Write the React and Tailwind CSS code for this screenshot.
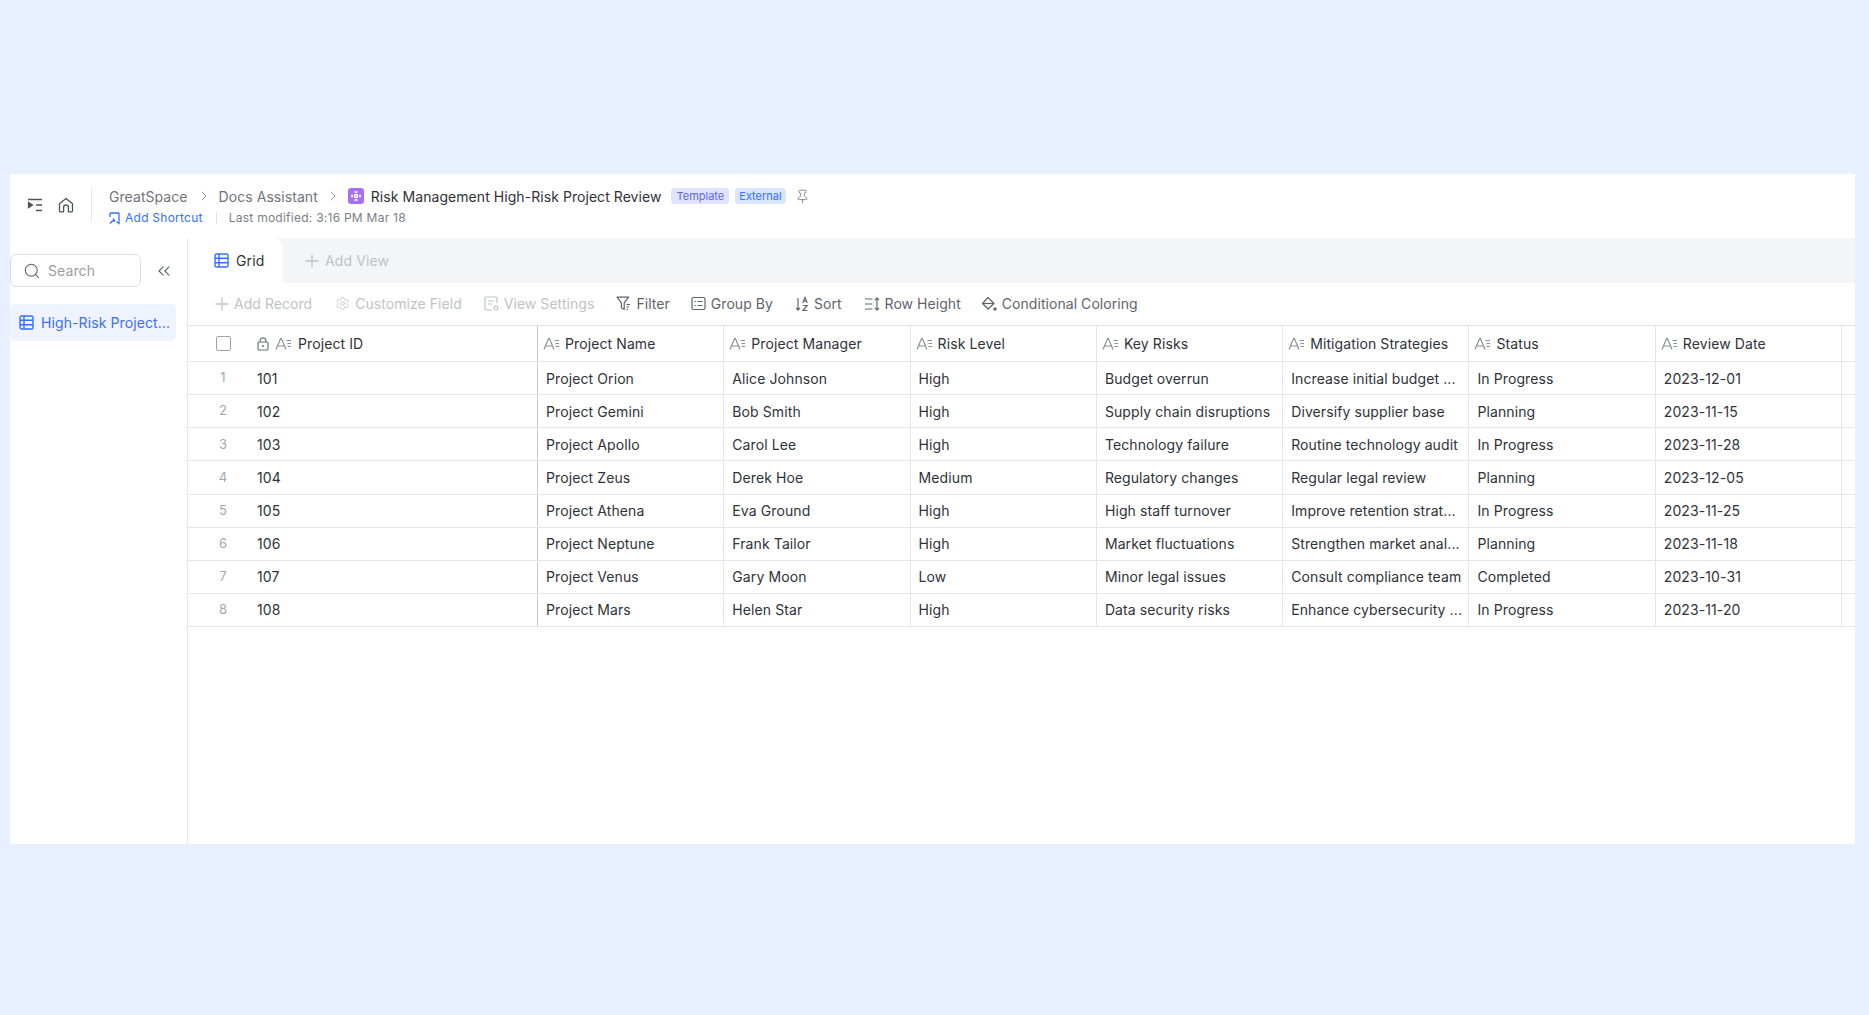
import React from "react";
import { Search, ChevronsLeft, Settings, Pin, ChevronRight } from "lucide-react";

const FieldIcon = () => (
  <svg width="17" height="14" viewBox="0 0 17 14" fill="none" stroke="#8a8f96" strokeWidth="1.2" className="shrink-0">
    <path d="M1 12.5 5.6 1.5h.8L11 12.5M2.8 9h6.4" />
    <path d="M11.5 3.5H16M12.5 6.5H16M12.5 9.5H16" />
  </svg>
);
const PlusIcon = () => (
  <svg width="14" height="14" viewBox="0 0 14 14" fill="none" stroke="currentColor" strokeWidth="1.3" className="shrink-0">
    <path d="M7 .5v13M.5 7h13" />
  </svg>
);
const GridIcon = ({ c = "#3370ff", s = 15 }) => (
  <svg width={s} height={s} viewBox="0 0 15 15" fill="none" stroke={c} strokeWidth="1.4" className="shrink-0">
    <rect x="1" y="1" width="13" height="13" rx="1.6" />
    <path d="M1 5.3h13M1 9.7h13M5 1v13" />
  </svg>
);
const ToggleIcon = () => (
  <svg width="16" height="14" viewBox="0 0 16 14" fill="none" stroke="#4e5358" strokeWidth="1.3">
    <path d="M1 1.5h14M9 7h6M9 12.5h6" />
    <path d="M1.5 4.5 5.5 7l-4 2.5z" fill="#4e5358" />
  </svg>
);
const HomeIcon = () => (
  <svg width="16" height="16" viewBox="0 0 16 16" fill="none" stroke="#4e5358" strokeWidth="1.3" strokeLinejoin="round">
    <path d="M1.5 6.8 8 1.5l6.5 5.3V14a.8.8 0 0 1-.8.8H10.4V10.2a2.4 2.4 0 0 0-4.8 0v4.6H2.3a.8.8 0 0 1-.8-.8z" />
  </svg>
);
const ShortcutIcon = () => (
  <svg width="11" height="13" viewBox="0 0 11 13" fill="none" stroke="#3370ff" strokeWidth="1.3" className="shrink-0">
    <path d="M1 5V1.6c0-.4.3-.6.6-.6h7.8c.3 0 .6.2.6.6v9.9L7.6 9.8" />
    <path d="M1 11.5 3.5 9H6M4 6.5l2 2.5" />
  </svg>
);
const DocLogo = () => (
  <span className="flex h-4 w-4 shrink-0 items-center justify-center rounded-[3px] bg-[#a66ff5]">
    <svg width="10" height="10" viewBox="0 0 10 10" fill="none" stroke="#fff" strokeWidth="1.5">
      <path d="M3.4 1h3.2M3.4 9h3.2M1 3.4v3.2M9 3.4v3.2" />
      <circle cx="5" cy="5" r="1.5" />
    </svg>
  </span>
);
const ViewSettingsIcon = () => (
  <svg width="15" height="15" viewBox="0 0 15 15" fill="none" stroke="#c0c3c8" strokeWidth="1.2" className="shrink-0">
    <path d="M8 14H2.2c-.6 0-1.2-.5-1.2-1.1V2.1C1 1.5 1.6 1 2.2 1h9.6c.6 0 1.2.5 1.2 1.1V7" />
    <path d="M4 5h6M4 8h4" />
    <circle cx="12" cy="12" r="1.8" />
  </svg>
);
const FilterIcon = () => (
  <svg width="15" height="15" viewBox="0 0 15 15" fill="none" stroke="#5f646b" strokeWidth="1.2" className="shrink-0">
    <path d="M1 1.2h11.6L8.2 6.8v6.6l-2.8-1.6v-5z" strokeLinejoin="round" />
    <path d="M10.5 8.5H14M10.5 11H13M10.5 13.5H12" />
  </svg>
);
const GroupIcon = () => (
  <svg width="15" height="15" viewBox="0 0 15 15" fill="none" stroke="#5f646b" strokeWidth="1.2" className="shrink-0">
    <rect x="1" y="1.5" width="13" height="12" rx="1.5" />
    <path d="M3.5 5.5h1.4M6.5 5.5h5M3.5 9.5h1.4M6.5 9.5h5" />
  </svg>
);
const SortIcon = () => (
  <svg width="14" height="16" viewBox="0 0 14 16" fill="none" stroke="#5f646b" strokeWidth="1.2" className="shrink-0">
    <path d="M3 2v12M1 11.8 3 14l2-2.2" />
    <path d="M7.8 7 10 1.4 12.2 7M8.5 5.2h3M8 9.5h4.2L8 14.5h4.4" />
  </svg>
);
const RowHeightIcon = () => (
  <svg width="16" height="14" viewBox="0 0 16 14" fill="none" stroke="#5f646b" strokeWidth="1.2" className="shrink-0">
    <path d="M1 2h7.5M1 7h7.5M1 12h7.5M13 1v12" />
    <path d="M11 3.2 13 1l2 2.2M11 10.8 13 13l2-2.2" />
  </svg>
);
const PaintIcon = () => (
  <svg width="16" height="16" viewBox="0 0 16 16" fill="none" stroke="#5f646b" strokeWidth="1.2" className="shrink-0">
    <path d="M7 1.5 13 7.5 7.2 13 1.5 7.5z" strokeLinejoin="round" />
    <path d="M1.8 7.5h11" />
    <circle cx="14" cy="13" r="1.1" fill="#5f646b" />
  </svg>
);
const LockIcon = () => (
  <svg width="12" height="14" viewBox="0 0 12 14" fill="none" stroke="#6d7278" strokeWidth="1.2" className="shrink-0">
    <rect x="1" y="5" width="10" height="8" rx="1.2" />
    <path d="M3.2 5V3.6a2.8 2.8 0 0 1 5.6 0V5" />
    <circle cx="6" cy="9" r="1" fill="#6d7278" stroke="none" />
  </svg>
);

const columns = ["Project Name", "Project Manager", "Risk Level", "Key Risks", "Mitigation Strategies", "Status", "Review Date"];
const rows = [
  ["101", "Project Orion", "Alice Johnson", "High", "Budget overrun", "Increase initial budget ...", "In Progress", "2023-12-01"],
  ["102", "Project Gemini", "Bob Smith", "High", "Supply chain disruptions", "Diversify supplier base", "Planning", "2023-11-15"],
  ["103", "Project Apollo", "Carol Lee", "High", "Technology failure", "Routine technology audit", "In Progress", "2023-11-28"],
  ["104", "Project Zeus", "Derek Hoe", "Medium", "Regulatory changes", "Regular legal review", "Planning", "2023-12-05"],
  ["105", "Project Athena", "Eva Ground", "High", "High staff turnover", "Improve retention strat...", "In Progress", "2023-11-25"],
  ["106", "Project Neptune", "Frank Tailor", "High", "Market fluctuations", "Strengthen market anal...", "Planning", "2023-11-18"],
  ["107", "Project Venus", "Gary Moon", "Low", "Minor legal issues", "Consult compliance team", "Completed", "2023-10-31"],
  ["108", "Project Mars", "Helen Star", "High", "Data security risks", "Enhance cybersecurity ...", "In Progress", "2023-11-20"],
];
const rowGrid = "grid grid-cols-[350px_repeat(7,186.3px)] border-b border-[#e4e6ea]";

const ToolItem = ({ icon, label, disabled, className = "" }) => (
  <div className={`flex items-center gap-[5px] ${disabled ? "text-[#bfc2c7]" : "text-[#5f646b]"} ${className}`}>
    {icon}
    <span>{label}</span>
  </div>
);

export default function App() {
  return (
    <div className="h-[1015px] overflow-hidden bg-[#e8effe] pt-[174px] pl-[10px] pr-[14px] font-['Inter',sans-serif] text-[14px] tracking-[0.1px] text-[#2f3237]">
      <div className="flex h-[670px] flex-col bg-white">
        <header className="flex h-[64px] shrink-0 items-start pt-[14px]">
          <div className="flex h-[34px] w-[82px] shrink-0 items-center gap-[15px] border-r border-[#e4e6ea] pl-[17px]">
            <ToggleIcon />
            <HomeIcon />
          </div>
          <div className="pl-[17px]">
            <div className="-mt-px flex h-[18px] items-center tracking-[0.06px]">
              <span className="text-[#6f747b]">GreatSpace</span>
              <ChevronRight size={16} strokeWidth={1.4} className="ml-[8px] mr-[7px] text-[#8c9097]" />
              <span className="text-[#6f747b]">Docs Assistant</span>
              <ChevronRight size={16} strokeWidth={1.4} className="ml-[7px] mr-[7px] text-[#8c9097]" />
              <DocLogo />
              <span className="ml-[7px] text-[#2f3237]">Risk Management High-Risk Project Review</span>
              <span className="ml-[10px] rounded-[4px] bg-[#e0e3ff] px-[5px] text-[11px] leading-[16px] tracking-normal text-[#5b65f5]">Template</span>
              <span className="ml-[6px] rounded-[4px] bg-[#d9e4ff] px-[4px] text-[11px] leading-[16px] tracking-normal text-[#3370ff]">External</span>
              <Pin size={15} strokeWidth={1.3} className="ml-[9px] text-[#70757b]" />
            </div>
            <div className="mt-[5px] flex h-[16px] items-center text-[12px] tracking-[0.25px]">
              <ShortcutIcon />
              <span className="ml-[5px] text-[#3370ff]">Add Shortcut</span>
              <span className="ml-[13px] mr-[12px] h-[12px] w-px bg-[#dfe1e5]" />
              <span className="text-[#7a7f86]">Last modified: 3:16 PM Mar 18</span>
            </div>
          </div>
        </header>
        <div className="flex min-h-0 flex-1">
          <aside className="w-[178px] shrink-0 border-r border-[#e4e6ea]">
            <div className="mt-[16px] flex items-center">
              <div className="flex h-[33px] w-[131px] items-center gap-[7px] rounded-[6px] border border-[#dcdee2] pl-[12px] text-[#9a9ea4]">
                <Search size={18} strokeWidth={1.4} className="text-[#5f646b]" />
                <span>Search</span>
              </div>
              <ChevronsLeft size={20} strokeWidth={1.3} className="ml-[13px] text-[#5f646b]" />
            </div>
            <div className="mt-[17px] flex h-[37px] w-[166px] items-center gap-[7px] rounded-[6px] bg-[#eef3fe] pl-[9px] text-[#3f6ff0]">
              <GridIcon s={15} />
              <span className="whitespace-nowrap">High-Risk Project...</span>
            </div>
          </aside>
          <main className="min-w-0 flex-1">
            <div className="flex h-[45px] bg-[#f4f5f7]">
              <div className="flex w-[95px] items-center gap-[7px] rounded-tr-[10px] bg-white pl-[26px]">
                <GridIcon />
                <span className="text-[#2f3237]">Grid</span>
              </div>
              <div className="flex items-center gap-[6px] pl-[22px] text-[#bfc2c7]">
                <PlusIcon />
                <span>Add View</span>
              </div>
            </div>
            <div className="flex h-[43px] items-center border-b border-[#dfe1e5] pb-px pl-[27px] tracking-[0.05px]">
              <ToolItem disabled icon={<PlusIcon />} label="Add Record" />
              <ToolItem disabled className="ml-[23px]" icon={<Settings size={15} strokeWidth={1.3} />} label="Customize Field" />
              <ToolItem disabled className="ml-[22px]" icon={<ViewSettingsIcon />} label="View Settings" />
              <ToolItem className="ml-[22px]" icon={<FilterIcon />} label="Filter" />
              <ToolItem className="ml-[21px]" icon={<GroupIcon />} label="Group By" />
              <ToolItem className="ml-[22px]" icon={<SortIcon />} label="Sort" />
              <ToolItem className="ml-[22px]" icon={<RowHeightIcon />} label="Row Height" />
              <ToolItem className="ml-[20px]" icon={<PaintIcon />} label="Conditional Coloring" />
            </div>
            <div className={`${rowGrid} h-[36px]`}>
              <div className="flex items-center border-r border-[#c9ccd1]">
                <span className="ml-[28px] h-[15px] w-[15px] rounded-[2px] border border-[#9fa3a9]" />
                <span className="ml-[26px]"><LockIcon /></span>
                <span className="ml-[6px]"><FieldIcon /></span>
                <span className="ml-[6px]">Project ID</span>
              </div>
              {columns.map((c) => (
                <div key={c} className="flex items-center gap-[5px] border-r border-[#e4e6ea] pl-[5px]">
                  <FieldIcon />
                  <span>{c}</span>
                </div>
              ))}
            </div>
            {rows.map((r, i) => (
              <div key={r[0]} className={`${rowGrid} h-[33.125px] tracking-[0.1px]`}>
                <div className="flex items-center border-r border-[#c9ccd1]">
                  <span className="w-[59px] pl-[11px] text-center text-[13px] text-[#a3a7ad]">{i + 1}</span>
                  <span className="ml-[10px]">{r[0]}</span>
                </div>
                {r.slice(1).map((v, j) => (
                  <div key={j} className="flex min-w-0 items-center border-r border-[#e4e6ea] px-[8px]">
                    <span className="whitespace-nowrap">{v}</span>
                  </div>
                ))}
              </div>
            ))}
          </main>
        </div>
      </div>
    </div>
  );
}
